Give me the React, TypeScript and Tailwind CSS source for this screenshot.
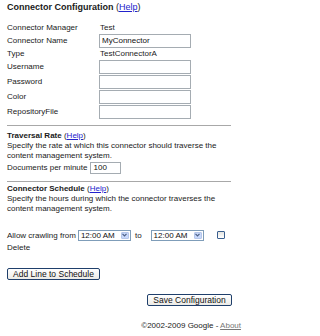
import React from "react";

const font = "font-['Liberation_Sans',Arial,sans-serif]";

function TextInput({ value = "", w = "w-[92px]", h = "h-[14px]" }: { value?: string; w?: string; h?: string }) {
  return (
    <div className={`${w} ${h} border border-[#a5acb2] bg-white pl-[2px] flex items-center leading-[10px] text-[#111]`}>
      {value}
    </div>
  );
}

function TimeSelect() {
  return (
    <div className="flex h-[11px] w-[53px] items-stretch border border-[#7f9db9] bg-white">
      <span className="flex-1 pl-[2px] leading-[9px] text-[#111]">12:00 AM</span>
      <span className="m-[1px] flex w-[8px] items-center justify-center rounded-[1px] border border-[#b6c7ea] bg-[#c8d8fb]">
        <svg width="5" height="4" viewBox="0 0 5 4">
          <path d="M0.5 0.8 L2.5 2.8 L4.5 0.8" fill="none" stroke="#4d6185" strokeWidth="1.2" />
        </svg>
      </span>
    </div>
  );
}

function XpButton({ label, w }: { label: string; w: string }) {
  return (
    <button
      className={`${w} h-[12px] rounded-[2px] border border-[#1f3f6b] bg-[linear-gradient(#ffffff,#ecebe6)] text-[8.5px] leading-[10px] text-[#111] ${font}`}
    >
      {label}
    </button>
  );
}

function Help() {
  return (
    <span className="font-normal">
      (<a className="text-[#2222cc] underline">Help</a>)
    </span>
  );
}

const rows: { label: string; kind: "text" | "input"; value?: string; h: string }[] = [
  { label: "Connector Manager", kind: "text", value: "Test", h: "h-[12px]" },
  { label: "Connector Name", kind: "input", value: "MyConnector", h: "h-[14px]" },
  { label: "Type", kind: "text", value: "TestConnectorA", h: "h-[12px]" },
  { label: "Username", kind: "input", h: "h-[15px]" },
  { label: "Password", kind: "input", h: "h-[15px]" },
  { label: "Color", kind: "input", h: "h-[15px]" },
  { label: "RepositoryFile", kind: "input", h: "h-[14px]" },
];

export default function App() {
  return (
    <div className={`w-[248px] h-[336px] bg-white text-[#1a1a1a] text-[8px] leading-[10px] ${font}`}>
      <div className="pl-[7px] pt-[2px]">
        {/* Connector Configuration */}
        <div className="h-[10px] text-[9px] font-bold">
          Connector Configuration <Help />
        </div>

        <div className="mt-[10px]">
          {rows.map((r) => (
            <div key={r.label} className={`flex items-start ${r.h}`}>
              <div className={`w-[92px] ${r.kind === "text" ? "pt-[1px]" : "pt-[2px]"}`}>{r.label}</div>
              {r.kind === "text" ? (
                <div className="pl-[1px] pt-[1px]">{r.value}</div>
              ) : (
                <TextInput value={r.value} />
              )}
            </div>
          ))}
        </div>

        <div className="mt-[6px] w-[224px] border-t border-[#a8a8a8]" />

        {/* Traversal Rate */}
        <div className="mt-[5px] font-bold">
          Traversal Rate <Help />
        </div>
        <p>
          Specify the rate at which this connector should traverse the
          <br />
          content management system.
        </p>
        <div className="flex h-[13px] items-center gap-[3px]">
          <span>Documents per minute</span>
          <TextInput value="100" w="w-[31px]" h="h-[12px]" />
        </div>

        <div className="mt-[7px] w-[224px] border-t border-[#a8a8a8]" />

        {/* Connector Schedule */}
        <div className="mt-[2px] font-bold">
          Connector Schedule <Help />
        </div>
        <p>
          Specify the hours during which the connector traverses the
          <br />
          content management system.
        </p>

        <div className="mt-[15px] flex h-[12px] items-center">
          <span className="pt-[2px]">Allow crawling from</span>
          <span className="ml-[2px]">
            <TimeSelect />
          </span>
          <span className="ml-[4px] pt-[2px]">to</span>
          <span className="ml-[9px]">
            <TimeSelect />
          </span>
          <span className="ml-[13px] h-[8px] w-[8px] rounded-[1px] border border-[#3a5f8f] bg-[linear-gradient(#e4e4e0,#ffffff)]" />
        </div>
        <div className="mt-[2px]">Delete</div>

        <div className="mt-[15px]">
          <XpButton label="Add Line to Schedule" w="w-[93px]" />
        </div>

        <div className="mt-[14px] flex w-[225px] justify-end">
          <XpButton label="Save Configuration" w="w-[85px]" />
        </div>
      </div>

      <div className="mt-[15px] pr-[7px] text-right text-[#222]">
        ©2002-2009 Google - <a className="text-[#777] underline">About</a>
      </div>
    </div>
  );
}
